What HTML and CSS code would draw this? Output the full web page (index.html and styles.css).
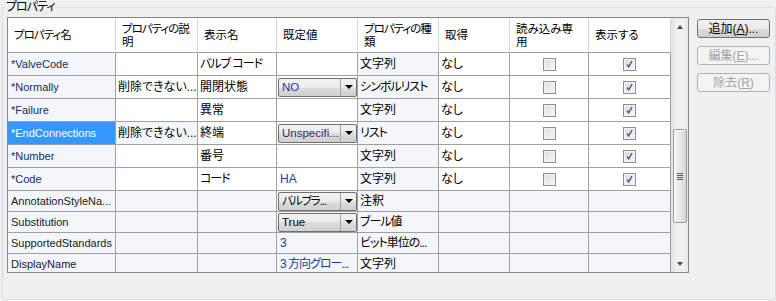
FILE: index.html
```html
<!DOCTYPE html>
<html lang="ja">

<head>
    <meta charset="UTF-8">
    <title>プロパティ</title>
    <link rel="stylesheet" href="styles.css">
</head>

<body>
    <div class="group">
        <div class="group-title kana">プロパティ</div>

        <div class="grid-box">
            <div class="grid">
                <!-- cabeçalho -->
                <div class="cell head kana">プロパティ名</div>
                <div class="cell head kana">プロパティの説<br>明</div>
                <div class="cell head">表示名</div>
                <div class="cell head">既定値</div>
                <div class="cell head kana">プロパティの種<br>類</div>
                <div class="cell head">取得</div>
                <div class="cell head">読み込み専<br>用</div>
                <div class="cell head">表示する</div>

                <!-- linha 1 -->
                <div class="cell ro name req">*ValveCode</div>
                <div class="cell"></div>
                <div class="cell kana">バルブ コード</div>
                <div class="cell"></div>
                <div class="cell ro">文字列</div>
                <div class="cell">なし</div>
                <div class="cell center"><span class="check"></span></div>
                <div class="cell center"><span class="check"><svg viewBox="0 0 11 11"><path d="M2.5 5.5 L4.5 8.5 L8.5 1.5" /></svg></span></div>

                <!-- linha 2 -->
                <div class="cell ro name req">*Normally</div>
                <div class="cell">削除できない...</div>
                <div class="cell">開閉状態</div>
                <div class="cell combo-cell">
                    <div class="combo"><span class="combo-text val">NO</span><span class="combo-btn"><i class="arrow-down"></i></span></div>
                </div>
                <div class="cell ro kana">シンボルリスト</div>
                <div class="cell">なし</div>
                <div class="cell center"><span class="check"></span></div>
                <div class="cell center"><span class="check"><svg viewBox="0 0 11 11"><path d="M2.5 5.5 L4.5 8.5 L8.5 1.5" /></svg></span></div>

                <!-- linha 3 -->
                <div class="cell ro name req">*Failure</div>
                <div class="cell"></div>
                <div class="cell">異常</div>
                <div class="cell"></div>
                <div class="cell ro">文字列</div>
                <div class="cell">なし</div>
                <div class="cell center"><span class="check"></span></div>
                <div class="cell center"><span class="check"><svg viewBox="0 0 11 11"><path d="M2.5 5.5 L4.5 8.5 L8.5 1.5" /></svg></span></div>

                <!-- linha 4 (selecionada) -->
                <div class="cell name selected">*EndConnections</div>
                <div class="cell ro">削除できない...</div>
                <div class="cell">終端</div>
                <div class="cell combo-cell">
                    <div class="combo"><span class="combo-text purple">Unspecifi...</span><span class="combo-btn"><i class="arrow-down"></i></span></div>
                </div>
                <div class="cell ro kana">リスト</div>
                <div class="cell">なし</div>
                <div class="cell center"><span class="check"></span></div>
                <div class="cell center"><span class="check"><svg viewBox="0 0 11 11"><path d="M2.5 5.5 L4.5 8.5 L8.5 1.5" /></svg></span></div>

                <!-- linha 5 -->
                <div class="cell ro name req">*Number</div>
                <div class="cell"></div>
                <div class="cell">番号</div>
                <div class="cell"></div>
                <div class="cell ro">文字列</div>
                <div class="cell">なし</div>
                <div class="cell center"><span class="check"></span></div>
                <div class="cell center"><span class="check"><svg viewBox="0 0 11 11"><path d="M2.5 5.5 L4.5 8.5 L8.5 1.5" /></svg></span></div>

                <!-- linha 6 -->
                <div class="cell ro name req">*Code</div>
                <div class="cell"></div>
                <div class="cell kana">コード</div>
                <div class="cell val">HA</div>
                <div class="cell ro">文字列</div>
                <div class="cell">なし</div>
                <div class="cell center"><span class="check"></span></div>
                <div class="cell center"><span class="check"><svg viewBox="0 0 11 11"><path d="M2.5 5.5 L4.5 8.5 L8.5 1.5" /></svg></span></div>

                <!-- linhas somente leitura -->
                <div class="cell ro name">AnnotationStyleNa...</div>
                <div class="cell ro"></div>
                <div class="cell ro"></div>
                <div class="cell ro combo-cell">
                    <div class="combo"><span class="combo-text kana">バルブラ...</span><span class="combo-btn"><i class="arrow-down"></i></span></div>
                </div>
                <div class="cell ro">注釈</div>
                <div class="cell ro"></div>
                <div class="cell ro"></div>
                <div class="cell ro"></div>

                <div class="cell ro name">Substitution</div>
                <div class="cell ro"></div>
                <div class="cell ro"></div>
                <div class="cell ro combo-cell">
                    <div class="combo"><span class="combo-text">True</span><span class="combo-btn"><i class="arrow-down"></i></span></div>
                </div>
                <div class="cell ro kana">ブール値</div>
                <div class="cell ro"></div>
                <div class="cell ro"></div>
                <div class="cell ro"></div>

                <div class="cell ro name">SupportedStandards</div>
                <div class="cell ro"></div>
                <div class="cell ro"></div>
                <div class="cell ro val">3</div>
                <div class="cell ro kana">ビット単位の...</div>
                <div class="cell ro"></div>
                <div class="cell ro"></div>
                <div class="cell ro"></div>

                <div class="cell ro name">DisplayName</div>
                <div class="cell ro"></div>
                <div class="cell ro"></div>
                <div class="cell ro val kana">3 方向グロー...</div>
                <div class="cell ro">文字列</div>
                <div class="cell ro"></div>
                <div class="cell ro"></div>
                <div class="cell ro"></div>
            </div>

            <div class="vscroll">
                <div class="sb-btn"><i class="arrow-up"></i></div>
                <div class="thumb"><span class="grip"></span></div>
                <div class="sb-btn bottom"><i class="arrow-down small"></i></div>
            </div>
        </div>

        <div class="buttons">
            <button class="btn">追加(<u>A</u>)...</button>
            <button class="btn" disabled>編集(<u>E</u>)...</button>
            <button class="btn" disabled>除去(<u>R</u>)</button>
        </div>
    </div>
</body>

</html>
```

FILE: styles.css
```css
* {
    margin: 0;
    padding: 0;
    box-sizing: border-box;
    font-family: "Liberation Sans", "Noto Sans CJK JP", sans-serif;
    font-feature-settings: "palt" 1;
}

body {
    background: #f0f0f0;
    font-size: 12px;
    color: #000;
    width: 776px;
    height: 301px;
    overflow: hidden;
}

/* katakana mais estreito, como na fonte do sistema */
.kana {
    letter-spacing: -1px;
}

.group {
    position: relative;
    display: flex;
    align-items: flex-start;
    width: 774px;
    height: 293px;
    margin: 7px 0 0 2px;
    padding: 9px 0 0 4px;
    border: 1px solid #d5dfe5;
    border-radius: 3px;
}

.group-title {
    position: absolute;
    top: -9px;
    left: 2px;
    padding: 0 1px;
    background: #f0f0f0;
    line-height: 16px;
}

.grid-box {
    display: flex;
    width: 682px;
    height: 256px;
    border: 1px solid #828790;
    background: #fff;
}

.grid {
    display: grid;
    grid-template-columns: 108px 82px 79px 81px 81px 71px 79px 82px;
    grid-template-rows: 35px repeat(6, 23px) repeat(4, 21px);
    align-content: start;
    width: 663px;
    height: 254px;
    overflow: hidden;
}

.cell {
    display: flex;
    align-items: center;
    padding: 0 2px;
    border-right: 1px solid #a0a0a0;
    border-bottom: 1px solid #a0a0a0;
    background: #fff;
    white-space: nowrap;
    overflow: hidden;
    line-height: 14px;
}

.cell.head {
    padding: 1px 0 0 6px;
    font-size: 11.5px;
    line-height: 13px;
    border-right-color: #d5d5d5;
    overflow: hidden;
}

.cell.ro {
    background: #f3f7fb;
}

.cell.name {
    font-size: 11px;
    padding-left: 3px;
    color: #1a1a1a;
}

.cell.name.req {
    color: #132d66;
}

.cell.selected {
    background: #3399ff;
    color: #fff;
}

.cell.center {
    justify-content: center;
}

.val {
    color: #1d3c96;
}

.purple {
    color: #3b1f6a;
}

.cell.val {
    padding-left: 3px;
}

.combo-cell {
    padding: 0 0 0 1px;
}

.combo {
    display: flex;
    width: 100%;
    height: 19px;
    border: 1px solid #707070;
    border-radius: 2px;
    background: linear-gradient(#f2f2f2, #ebebeb 50%, #dddddd 50%, #cfcfcf);
}

.combo-text {
    flex: 1;
    padding-left: 3px;
    line-height: 17px;
    font-size: 11.5px;
    overflow: hidden;
}

.combo-btn {
    display: flex;
    align-items: center;
    justify-content: center;
    width: 16px;
    border-left: 1px solid #a3a3a3;
}

.arrow-down {
    width: 0;
    height: 0;
    border-left: 4px solid transparent;
    border-right: 4px solid transparent;
    border-top: 4px solid #000;
}

.arrow-down.small {
    border-left-width: 3.5px;
    border-right-width: 3.5px;
    border-top: 4px solid #4a4a4a;
}

.arrow-up {
    width: 0;
    height: 0;
    border-left: 3.5px solid transparent;
    border-right: 3.5px solid transparent;
    border-bottom: 4px solid #4a4a4a;
}

.check {
    display: flex;
    align-items: center;
    justify-content: center;
    width: 13px;
    height: 13px;
    border: 1px solid #8e8f8f;
    background: linear-gradient(135deg, #dcdcdc, #f8f8f8);
    box-shadow: inset 0 0 0 1px #f4f4f4;
}

.check svg {
    width: 9px;
    height: 9px;
}

.check path {
    fill: none;
    stroke: #4a5f97;
    stroke-width: 1.8;
}

.vscroll {
    display: flex;
    flex-direction: column;
    align-items: center;
    width: 17px;
    height: 254px;
    border-left: 1px solid #e3e3e3;
    background: linear-gradient(to right, #e3e3e3, #f1f1f1 30%, #f1f1f1 70%, #e6e6e6);
}

.sb-btn {
    display: flex;
    align-items: center;
    justify-content: center;
    width: 100%;
    height: 17px;
}

.sb-btn.bottom {
    margin-top: auto;
}

.thumb {
    display: flex;
    align-items: center;
    justify-content: center;
    width: 14px;
    height: 94px;
    margin-top: 94px;
    border: 1px solid #999;
    border-radius: 2px;
    background: linear-gradient(to right, #f5f5f5, #e8e8e8 50%, #d6d6d6);
    box-shadow: inset 1px 1px 0 #fff;
}

.grip {
    width: 6px;
    height: 7px;
    background: repeating-linear-gradient(#5a5a5a 0, #5a5a5a 1px, transparent 1px, transparent 2px);
}

.buttons {
    display: flex;
    flex-direction: column;
    gap: 8px;
    margin: 2px 0 0 8px;
}

.btn {
    width: 73px;
    height: 19px;
    border: 1px solid #707070;
    border-radius: 3px;
    background: linear-gradient(#f2f2f2, #ebebeb 50%, #dddddd 50%, #cfcfcf);
    font-size: 12px;
    line-height: 16px;
    color: #000;
}

.btn:disabled {
    border-color: #adb2b5;
    background: #f4f4f4;
    color: #a3a3a3;
}

.btn u {
    text-decoration: underline;
}
```
